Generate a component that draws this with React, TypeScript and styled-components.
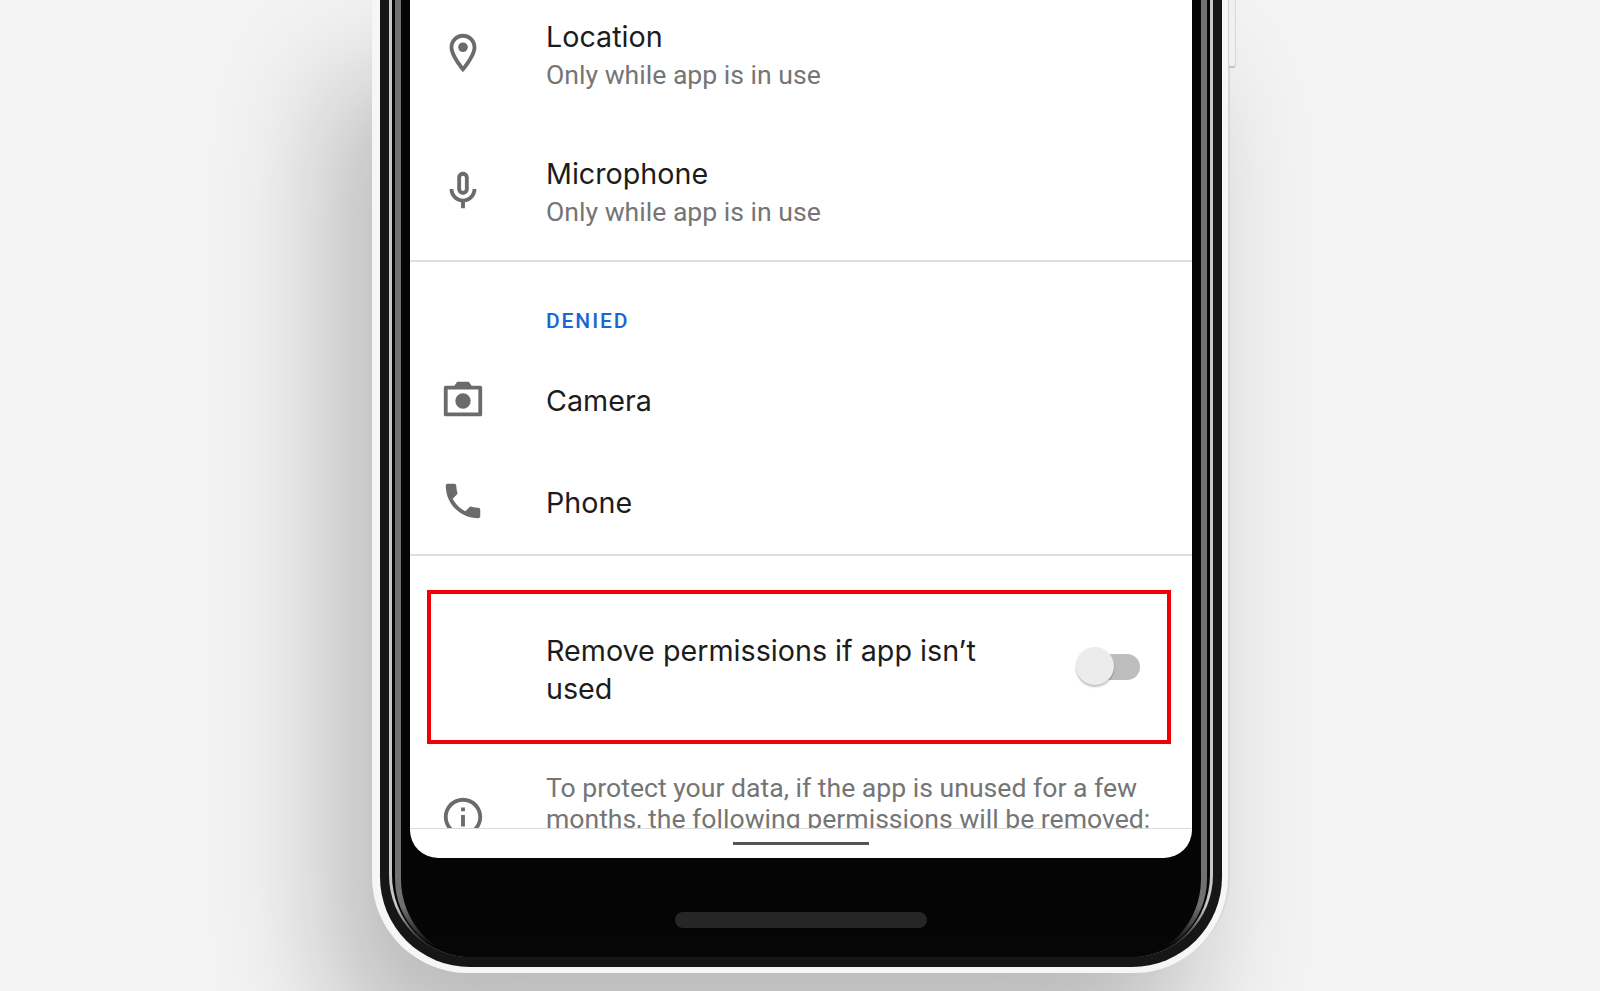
import React from 'react';
import styled, { createGlobalStyle } from 'styled-components';

const GlobalStyle = createGlobalStyle`
  html, body {
    margin: 0;
    height: 100%;
    overflow: hidden;
    background: #f3f3f3;
  }
`;

const Page = styled.div`
  align-items: flex-end;
  background: #f3f3f3;
  box-sizing: border-box;
  display: flex;
  height: 991px;
  justify-content: center;
  overflow: hidden;
  padding-bottom: 18px;
  padding-left: 2px;
`;
const Shell = styled.div`
  background: #f6f6f6;
  border-radius: 0 0 96px 96px;
  border-right: 2px solid #d8d8d8;
  box-shadow: -40px 80px 120px rgba(0, 0, 0, 0.24);
  box-sizing: border-box;
  height: 973px;
  padding: 0 6px 6px 8px;
  position: relative;
  width: 858px;
`;
const PowerButton = styled.div`
  background: #f0f0f0;
  border-bottom: 2px solid #c4c4c4;
  border-left: 1px solid #cfcfcf;
  border-right: 1px solid #d8d8d8;
  border-radius: 0 0 3px 3px;
  height: 66px;
  position: absolute;
  right: -8px;
  top: 0;
  width: 6px;
`;
const Bezel = styled.div`
  background: #161616;
  border-radius: 0 0 90px 90px;
  box-sizing: border-box;
  display: flex;
  height: 100%;
  padding: 0 9px;
  position: relative;

  /* the chrome lines fade out round the bottom corners */
  &::after {
    background: linear-gradient(180deg, transparent 40%, #060606 88%);
    border-radius: 0 0 82px 82px;
    bottom: 10px;
    content: '';
    height: 84px;
    left: 9px;
    position: absolute;
    right: 9px;
  }
`;
const OuterRing = styled.div`
  background: #050505;
  border-left: 3px solid #c8c8c8;
  border-radius: 0 0 82px 82px;
  border-right: 3px solid #c8c8c8;
  box-sizing: border-box;
  display: flex;
  height: calc(100% - 10px);
  padding: 0 3px;
  width: 100%;
`;
const InnerRing = styled.div`
  align-items: center;
  background: #050505;
  border-left: 6px solid #707070;
  border-radius: 0 0 78px 78px;
  border-right: 6px solid #707070;
  box-sizing: border-box;
  display: flex;
  flex-direction: column;
  height: 100%;
  padding: 0 9px;
  width: 100%;
`;
const Screen = styled.div`
  background: #fff;
  border-radius: 0 0 28px 28px;
  display: flex;
  flex: none;
  flex-direction: column;
  height: 858px;
  overflow: hidden;
  width: 782px;
`;
const Content = styled.div`
  border-bottom: 1px solid #dcdcdc;
  display: flex;
  flex: none;
  flex-direction: column;
  height: 828px;
  overflow: hidden;
`;
const Section = styled.div<{ $gap?: number }>`
  border-bottom: 2px solid #e0e0e0;
  display: flex;
  flex: none;
  flex-direction: column;
  gap: ${p => p.$gap || 0}px;
`;
const Row = styled.div<{ $height: number }>`
  align-items: center;
  display: flex;
  flex: none;
  height: ${p => p.$height}px;
`;
const IconCell = styled.div<{ $lift?: number }>`
  color: #6b6b6b;
  display: flex;
  flex: none;
  justify-content: center;
  margin-right: 60px;
  padding-bottom: ${p => p.$lift || 0}px;
  padding-left: 30px;
  width: 46px;
`;
const Texts = styled.div`
  display: flex;
  flex-direction: column;
`;
const Title = styled.div`
  color: #1c1c1c;
  font-family: Inter, sans-serif;
  font-size: 28.7px;
  line-height: 38px;
`;
const Sub = styled.div`
  color: #757575;
  font-family: Roboto, sans-serif;
  font-size: 26.6px;
  line-height: 38px;
`;
const Heading = styled.div`
  color: #1a66d6;
  font-family: Roboto, sans-serif;
  font-size: 21px;
  font-weight: 500;
  letter-spacing: 1.9px;
  line-height: 24px;
  padding: 47px 0 17px 136px;
`;
const Highlight = styled.div`
  align-items: center;
  border: 4px solid #f20009;
  box-sizing: border-box;
  display: flex;
  flex: none;
  height: 154px;
  justify-content: space-between;
  margin: 34px 21px 0 17px;
  padding: 0 27px 0 115px;
`;
const ToggleTitle = styled(Title)`
  padding-top: 6px;
  width: 440px;
`;
const Toggle = styled.div`
  align-items: center;
  display: flex;
  height: 40px;
  justify-content: flex-end;
  position: relative;
  width: 64px;
`;
const Track = styled.div`
  background: #bdbdbd;
  border-radius: 13px;
  height: 26px;
  width: 54px;
`;
const Knob = styled.div`
  background: #ececec;
  border-radius: 50%;
  box-shadow: 0 2px 2px rgba(0, 0, 0, 0.25);
  height: 38px;
  left: 0;
  position: absolute;
  top: 0;
  width: 38px;
`;
const InfoRow = styled.div`
  align-items: flex-start;
  display: flex;
  padding-top: 28px;
`;
const InfoIcon = styled(IconCell)`
  padding-top: 22px;
`;
const InfoText = styled(Sub)`
  line-height: 31px;
  white-space: nowrap;
`;
const NavArea = styled.div`
  align-items: center;
  display: flex;
  flex: 1;
  justify-content: center;
`;
const HomeBar = styled.div`
  background: #555;
  height: 3px;
  width: 136px;
`;
const Speaker = styled.div`
  background: #262626;
  border-radius: 8px;
  flex: none;
  height: 16px;
  margin-top: 54px;
  position: relative;
  width: 252px;
  z-index: 1;
`;

const Icon = ({ children }: { children: React.ReactNode }) => (
  <svg width="46" height="46" viewBox="0 0 24 24" fill="currentColor">{ children }</svg>
);

export default function App() {
  return (
    <Page>
      <GlobalStyle />
      <Shell>
        <PowerButton />
        <Bezel>
          <OuterRing>
            <InnerRing>
              <Screen>
                <Content>
                  <Section $gap={ 15 }>
                    <Row $height={ 111 }>
                      <IconCell $lift={ 6 }>
                        <Icon>
                          <path d="M12 2C8.13 2 5 5.13 5 9c0 5.25 7 13 7 13s7-7.75 7-13c0-3.87-3.13-7-7-7zM7 9c0-2.76 2.24-5 5-5s5 2.24 5 5c0 2.88-2.88 7.19-5 9.88C9.92 16.21 7 11.85 7 9z" />
                          <circle cx="12" cy="9" r="2.5" />
                        </Icon>
                      </IconCell>
                      <Texts>
                        <Title>Location</Title>
                        <Sub>Only while app is in use</Sub>
                      </Texts>
                    </Row>
                    <Row $height={ 134 }>
                      <IconCell $lift={ 4 }>
                        <Icon>
                          <path d="M12 14c1.66 0 3-1.34 3-3V5c0-1.66-1.34-3-3-3S9 3.34 9 5v6c0 1.66 1.34 3 3 3zm-1-9c0-.55.45-1 1-1s1 .45 1 1v6c0 .55-.45 1-1 1s-1-.45-1-1V5zm6 6c0 2.76-2.24 5-5 5s-5-2.24-5-5H5c0 3.53 2.61 6.43 6 6.92V21h2v-3.08c3.39-.49 6-3.39 6-6.92h-2z" />
                        </Icon>
                      </IconCell>
                      <Texts>
                        <Title>Microphone</Title>
                        <Sub>Only while app is in use</Sub>
                      </Texts>
                    </Row>
                  </Section>
                  <Section>
                    <Heading>DENIED</Heading>
                    <Row $height={ 102 }>
                      <IconCell>
                        <Icon>
                          <path d="M20 4h-3.5L15.5 2.6c-.2-.3-.5-.6-1-.6h-5c-.5 0-.8.3-1 .6L7.5 4H3c-.6 0-1 .4-1 1v14c0 .6.4 1 1 1h18c.6 0 1-.4 1-1V5c0-.6-.4-1-1-1zm0 14H4V6h16v12z" />
                          <circle cx="12" cy="12" r="4" />
                        </Icon>
                      </IconCell>
                      <Title>Camera</Title>
                    </Row>
                    <Row $height={ 102 }>
                      <IconCell $lift={ 4 }>
                        <Icon>
                          <path d="M6.62 10.79c1.44 2.83 3.76 5.14 6.59 6.59l2.2-2.2c.27-.27.67-.36 1.02-.24 1.12.37 2.33.57 3.57.57.55 0 1 .45 1 1V20c0 .55-.45 1-1 1-9.39 0-17-7.61-17-17 0-.55.45-1 1-1h3.5c.55 0 1 .45 1 1 0 1.25.2 2.45.57 3.57.11.35.03.74-.25 1.02l-2.2 2.2z" />
                        </Icon>
                      </IconCell>
                      <Title>Phone</Title>
                    </Row>
                  </Section>
                  <Highlight>
                    <ToggleTitle>Remove permissions if app isn’t used</ToggleTitle>
                    <Toggle>
                      <Track />
                      <Knob />
                    </Toggle>
                  </Highlight>
                  <InfoRow>
                    <InfoIcon>
                      <Icon>
                        <path d="M11 7h2v2h-2zm0 4h2v6h-2zm1-9C6.48 2 2 6.48 2 12s4.48 10 10 10 10-4.48 10-10S17.52 2 12 2zm0 18c-4.41 0-8-3.59-8-8s3.59-8 8-8 8 3.59 8 8-3.59 8-8 8z" />
                      </Icon>
                    </InfoIcon>
                    <InfoText>
                      To protect your data, if the app is unused for a few<br />
                      months, the following permissions will be removed:
                    </InfoText>
                  </InfoRow>
                </Content>
                <NavArea>
                  <HomeBar />
                </NavArea>
              </Screen>
              <Speaker />
            </InnerRing>
          </OuterRing>
        </Bezel>
      </Shell>
    </Page>
  );
}
